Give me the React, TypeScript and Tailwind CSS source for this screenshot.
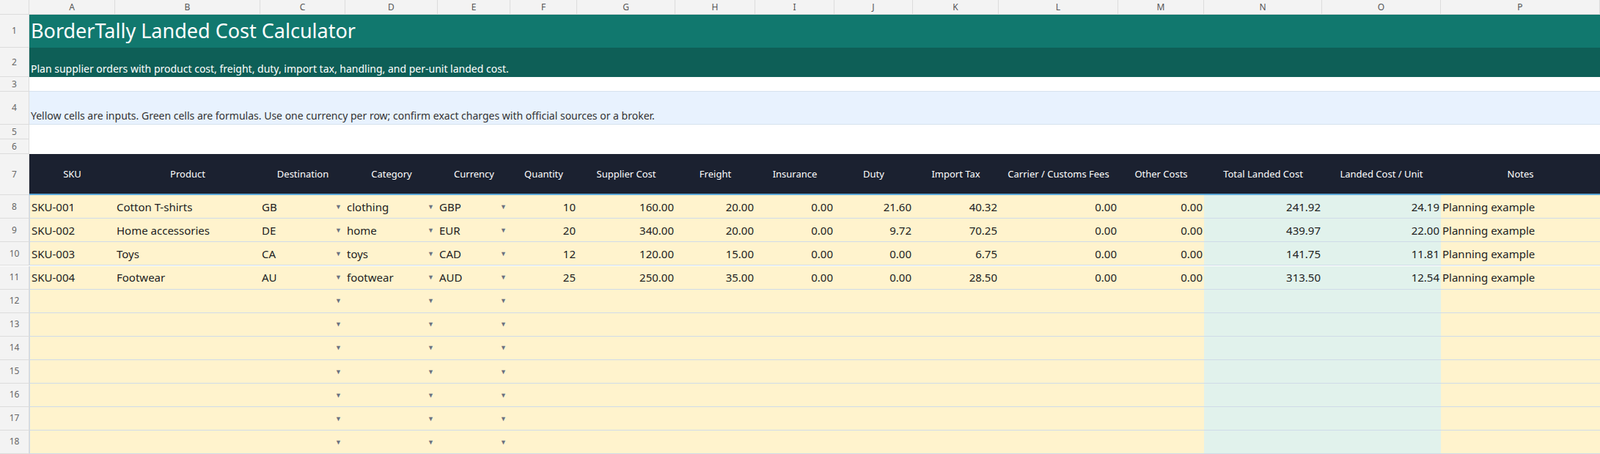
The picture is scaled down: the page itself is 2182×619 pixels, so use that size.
import React from "react";

const cols = "grid-cols-[40px_117px_198px_116px_126px_99px_91px_134px_109px_108px_107px_117px_163px_117px_161px_162px_217px]";
const letters = "ABCDEFGHIJKLMNOP".split("");
const headers = ["SKU","Product","Destination","Category","Currency","Quantity","Supplier Cost","Freight","Insurance","Duty","Import Tax","Carrier / Customs Fees","Other Costs","Total Landed Cost","Landed Cost / Unit","Notes"];
const data = [
  ["SKU-001","Cotton T-shirts","GB","clothing","GBP","10","160.00","20.00","0.00","21.60","40.32","0.00","0.00","241.92","24.19","Planning example"],
  ["SKU-002","Home accessories","DE","home","EUR","20","340.00","20.00","0.00","9.72","70.25","0.00","0.00","439.97","22.00","Planning example"],
  ["SKU-003","Toys","CA","toys","CAD","12","120.00","15.00","0.00","0.00","6.75","0.00","0.00","141.75","11.81","Planning example"],
  ["SKU-004","Footwear","AU","footwear","AUD","25","250.00","35.00","0.00","0.00","28.50","0.00","0.00","313.50","12.54","Planning example"],
];
const empty = Array(16).fill("");
const rows = [...data, empty, empty, empty, empty, empty, empty, empty];

function RowNum({ n, h }: { n: number; h: string }) {
  return (
    <div className={`${h} bg-[#f3f3f3] border-r border-b border-[#dcdcdc] flex items-center justify-center text-[12px] text-[#666]`}>{n}</div>
  );
}

function Arrow() {
  return <span className="text-[9px] text-[#6b7280] mr-[5px]">▼</span>;
}

export default function App() {
  return (
    <div className={`grid ${cols} w-[2182px] h-[619px] overflow-hidden bg-white text-[#222] font-['Liberation_Sans',Arial,sans-serif]`}>
      <div className="h-[20px] bg-[#f3f3f3] border-r border-b border-[#dcdcdc]" />
      {letters.map((l) => (
        <div key={l} className="h-[20px] bg-[#f3f3f3] border-r border-b border-[#dcdcdc] flex items-center justify-center text-[12px] text-[#555]">{l}</div>
      ))}

      <RowNum n={1} h="h-[45px]" />
      <div className="col-span-16 h-[45px] bg-[#11786e] text-white text-[27px] flex items-center pl-[2px]">BorderTally Landed Cost Calculator</div>

      <RowNum n={2} h="h-[40px]" />
      <div className="col-span-16 h-[40px] bg-[#0e5f57] text-white text-[14px] flex items-end pb-[1px] pl-[2px]">Plan supplier orders with product cost, freight, duty, import tax, handling, and per-unit landed cost.</div>

      <RowNum n={3} h="h-[20px]" />
      <div className="col-span-16 h-[20px] border-b border-[#d6e2ee]" />

      <RowNum n={4} h="h-[45px]" />
      <div className="col-span-16 h-[45px] bg-[#e8f2fe] border-b border-[#d6e2ee] text-[14px] text-[#333] flex items-end pb-[1px] pl-[2px]">Yellow cells are inputs. Green cells are formulas. Use one currency per row; confirm exact charges with official sources or a broker.</div>

      <RowNum n={5} h="h-[20px]" />
      <div className="col-span-16 h-[20px]" />
      <RowNum n={6} h="h-[20px]" />
      <div className="col-span-16 h-[20px]" />

      <RowNum n={7} h="h-[56px]" />
      {headers.map((h) => (
        <div key={h} className="h-[56px] bg-[#1b2130] border-b-2 border-[#5aa6d6] text-white text-[13px] flex items-center justify-center">{h}</div>
      ))}

      {rows.map((r, i) => (
        <React.Fragment key={i}>
          <RowNum n={i + 8} h="h-[32px]" />
          {r.map((v, j) => {
            const green = j === 13 || j === 14;
            const bg = green ? "bg-[#e1f2ec]" : "bg-[#fff3cd]";
            const left = j === 0 ? "border-l border-[#a8cbe4]" : "";
            if (j <= 1 || j === 15) {
              return <div key={j} className={`h-[32px] ${bg} ${left} border-b border-[#cfdbe8] text-[15px] flex items-center pl-[2px] whitespace-nowrap`}>{v}</div>;
            }
            if (j <= 4) {
              return (
                <div key={j} className={`h-[32px] ${bg} border-b border-[#cfdbe8] text-[15px] flex items-center justify-between pl-[2px]`}>
                  <span>{v}</span>
                  <Arrow />
                </div>
              );
            }
            return <div key={j} className={`h-[32px] ${bg} border-b border-[#cfdbe8] text-[15px] flex items-end justify-end pb-[4px] pr-[2px]`}>{v}</div>;
          })}
        </React.Fragment>
      ))}
    </div>
  );
}
